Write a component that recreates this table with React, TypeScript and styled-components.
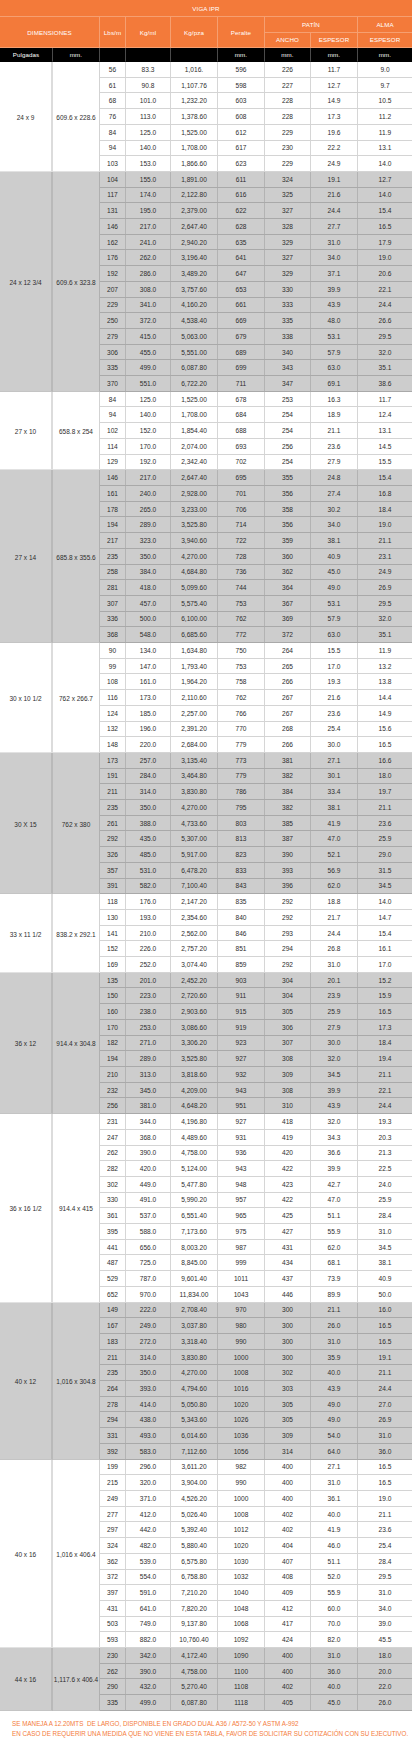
import React from "react";
import styled, { createGlobalStyle } from "styled-components";

const COLS = "53px 47px 26px 45px 47px 47px 46px 47px 54px";
const DATA_COLS = "26px 45px 47px 47px 46px 47px 54px";
const ROW_H = 15.71;

type Group = { inch: string; mm: string; rows: string[] };

const GROUPS: Group[] = [
  { inch: "24 x 9", mm: "609.6 x 228.6", rows: [
    "56 83.3 1,016. 596 226 11.7 9.0",
    "61 90.8 1,107.76 598 227 12.7 9.7",
    "68 101.0 1,232.20 603 228 14.9 10.5",
    "76 113.0 1,378.60 608 228 17.3 11.2",
    "84 125.0 1,525.00 612 229 19.6 11.9",
    "94 140.0 1,708.00 617 230 22.2 13.1",
    "103 153.0 1,866.60 623 229 24.9 14.0",
  ]},
  { inch: "24 x 12 3/4", mm: "609.6 x 323.8", rows: [
    "104 155.0 1,891.00 611 324 19.1 12.7",
    "117 174.0 2,122.80 616 325 21.6 14.0",
    "131 195.0 2,379.00 622 327 24.4 15.4",
    "146 217.0 2,647.40 628 328 27.7 16.5",
    "162 241.0 2,940.20 635 329 31.0 17.9",
    "176 262.0 3,196.40 641 327 34.0 19.0",
    "192 286.0 3,489.20 647 329 37.1 20.6",
    "207 308.0 3,757.60 653 330 39.9 22.1",
    "229 341.0 4,160.20 661 333 43.9 24.4",
    "250 372.0 4,538.40 669 335 48.0 26.6",
    "279 415.0 5,063.00 679 338 53.1 29.5",
    "306 455.0 5,551.00 689 340 57.9 32.0",
    "335 499.0 6,087.80 699 343 63.0 35.1",
    "370 551.0 6,722.20 711 347 69.1 38.6",
  ]},
  { inch: "27 x 10", mm: "658.8 x 254", rows: [
    "84 125.0 1,525.00 678 253 16.3 11.7",
    "94 140.0 1,708.00 684 254 18.9 12.4",
    "102 152.0 1,854.40 688 254 21.1 13.1",
    "114 170.0 2,074.00 693 256 23.6 14.5",
    "129 192.0 2,342.40 702 254 27.9 15.5",
  ]},
  { inch: "27 x 14", mm: "685.8 x 355.6", rows: [
    "146 217.0 2,647.40 695 355 24.8 15.4",
    "161 240.0 2,928.00 701 356 27.4 16.8",
    "178 265.0 3,233.00 706 358 30.2 18.4",
    "194 289.0 3,525.80 714 356 34.0 19.0",
    "217 323.0 3,940.60 722 359 38.1 21.1",
    "235 350.0 4,270.00 728 360 40.9 23.1",
    "258 384.0 4,684.80 736 362 45.0 24.9",
    "281 418.0 5,099.60 744 364 49.0 26.9",
    "307 457.0 5,575.40 753 367 53.1 29.5",
    "336 500.0 6,100.00 762 369 57.9 32.0",
    "368 548.0 6,685.60 772 372 63.0 35.1",
  ]},
  { inch: "30 x 10 1/2", mm: "762 x 266.7", rows: [
    "90 134.0 1,634.80 750 264 15.5 11.9",
    "99 147.0 1,793.40 753 265 17.0 13.2",
    "108 161.0 1,964.20 758 266 19.3 13.8",
    "116 173.0 2,110.60 762 267 21.6 14.4",
    "124 185.0 2,257.00 766 267 23.6 14.9",
    "132 196.0 2,391.20 770 268 25.4 15.6",
    "148 220.0 2,684.00 779 266 30.0 16.5",
  ]},
  { inch: "30 X 15", mm: "762 x 380", rows: [
    "173 257.0 3,135.40 773 381 27.1 16.6",
    "191 284.0 3,464.80 779 382 30.1 18.0",
    "211 314.0 3,830.80 786 384 33.4 19.7",
    "235 350.0 4,270.00 795 382 38.1 21.1",
    "261 388.0 4,733.60 803 385 41.9 23.6",
    "292 435.0 5,307.00 813 387 47.0 25.9",
    "326 485.0 5,917.00 823 390 52.1 29.0",
    "357 531.0 6,478.20 833 393 56.9 31.5",
    "391 582.0 7,100.40 843 396 62.0 34.5",
  ]},
  { inch: "33 x 11 1/2", mm: "838.2 x 292.1", rows: [
    "118 176.0 2,147.20 835 292 18.8 14.0",
    "130 193.0 2,354.60 840 292 21.7 14.7",
    "141 210.0 2,562.00 846 293 24.4 15.4",
    "152 226.0 2,757.20 851 294 26.8 16.1",
    "169 252.0 3,074.40 859 292 31.0 17.0",
  ]},
  { inch: "36 x 12", mm: "914.4 x 304.8", rows: [
    "135 201.0 2,452.20 903 304 20.1 15.2",
    "150 223.0 2,720.60 911 304 23.9 15.9",
    "160 238.0 2,903.60 915 305 25.9 16.5",
    "170 253.0 3,086.60 919 306 27.9 17.3",
    "182 271.0 3,306.20 923 307 30.0 18.4",
    "194 289.0 3,525.80 927 308 32.0 19.4",
    "210 313.0 3,818.60 932 309 34.5 21.1",
    "232 345.0 4,209.00 943 308 39.9 22.1",
    "256 381.0 4,648.20 951 310 43.9 24.4",
  ]},
  { inch: "36 x 16 1/2", mm: "914.4 x 415", rows: [
    "231 344.0 4,196.80 927 418 32.0 19.3",
    "247 368.0 4,489.60 931 419 34.3 20.3",
    "262 390.0 4,758.00 936 420 36.6 21.3",
    "282 420.0 5,124.00 943 422 39.9 22.5",
    "302 449.0 5,477.80 948 423 42.7 24.0",
    "330 491.0 5,990.20 957 422 47.0 25.9",
    "361 537.0 6,551.40 965 425 51.1 28.4",
    "395 588.0 7,173.60 975 427 55.9 31.0",
    "441 656.0 8,003.20 987 431 62.0 34.5",
    "487 725.0 8,845.00 999 434 68.1 38.1",
    "529 787.0 9,601.40 1011 437 73.9 40.9",
    "652 970.0 11,834.00 1043 446 89.9 50.0",
  ]},
  { inch: "40 x 12", mm: "1,016 x 304.8", rows: [
    "149 222.0 2,708.40 970 300 21.1 16.0",
    "167 249.0 3,037.80 980 300 26.0 16.5",
    "183 272.0 3,318.40 990 300 31.0 16.5",
    "211 314.0 3,830.80 1000 300 35.9 19.1",
    "235 350.0 4,270.00 1008 302 40.0 21.1",
    "264 393.0 4,794.60 1016 303 43.9 24.4",
    "278 414.0 5,050.80 1020 305 49.0 27.0",
    "294 438.0 5,343.60 1026 305 49.0 26.9",
    "331 493.0 6,014.60 1036 309 54.0 31.0",
    "392 583.0 7,112.60 1056 314 64.0 36.0",
  ]},
  { inch: "40 x 16", mm: "1,016 x 406.4", rows: [
    "199 296.0 3,611.20 982 400 27.1 16.5",
    "215 320.0 3,904.00 990 400 31.0 16.5",
    "249 371.0 4,526.20 1000 400 36.1 19.0",
    "277 412.0 5,026.40 1008 402 40.0 21.1",
    "297 442.0 5,392.40 1012 402 41.9 23.6",
    "324 482.0 5,880.40 1020 404 46.0 25.4",
    "362 539.0 6,575.80 1030 407 51.1 28.4",
    "372 554.0 6,758.80 1032 408 52.0 29.5",
    "397 591.0 7,210.20 1040 409 55.9 31.0",
    "431 641.0 7,820.20 1048 412 60.0 34.0",
    "503 749.0 9,137.80 1068 417 70.0 39.0",
    "593 882.0 10,760.40 1092 424 82.0 45.5",
  ]},
  { inch: "44 x 16", mm: "1,117.6 x 406.4", rows: [
    "230 342.0 4,172.40 1090 400 31.0 18.0",
    "262 390.0 4,758.00 1100 400 36.0 20.0",
    "290 432.0 5,270.40 1108 402 40.0 22.0",
    "335 499.0 6,087.80 1118 405 45.0 26.0",
  ]},
];

const Global = createGlobalStyle`
  html, body { margin: 0; padding: 0; background: #ffffff; }
  body { font-family: "Liberation Sans", Arial, sans-serif; }
`;

const Page = styled.div`
  width: 412px;
  background: #ffffff;
`;

const Head = styled.div`
  display: grid;
  grid-template-columns: ${COLS};
  grid-template-rows: 17px 15.5px 15.5px 14px;
  background: #f37a3a;
`;

const HeadCell = styled.div<{ $col: string; $row: string; $dark?: boolean; $last?: boolean }>`
  grid-column: ${(p) => p.$col};
  grid-row: ${(p) => p.$row};
  display: flex;
  align-items: center;
  justify-content: center;
  box-sizing: border-box;
  font-size: 6.2px;
  letter-spacing: 0.1px;
  color: #ffffff;
  background: ${(p) => (p.$dark ? "#000000" : "#f37a3a")};
  border-right: ${(p) =>
    p.$last ? "none" : p.$dark ? "1px solid #4a4a4a" : "1px solid rgba(255,255,255,0.28)"};
  border-bottom: ${(p) => (p.$dark ? "1px solid #000" : "1px solid rgba(255,255,255,0.28)")};
  white-space: nowrap;
`;

const GroupBox = styled.div<{ $shade: boolean }>`
  display: flex;
  background: ${(p) => (p.$shade ? "#cdcdcd" : "#ffffff")};
  color: #2e2e2e;
`;

const Label = styled.div<{ $w: number; $shade: boolean; $thick?: boolean }>`
  width: ${(p) => p.$w}px;
  flex: none;
  box-sizing: border-box;
  display: flex;
  align-items: center;
  justify-content: center;
  font-size: 6.5px;
  white-space: nowrap;
  padding-top: 2px;
  border-right: ${(p) =>
    p.$thick
      ? `2px solid ${p.$shade ? "#b9b9b9" : "#dcdcdc"}`
      : `1px solid ${p.$shade ? "#b0b0b0" : "#d3d3d3"}`};
  border-bottom: 1px solid ${(p) => (p.$shade ? "#c4c4c4" : "#e2e2e2")};
`;

const Rows = styled.div`
  flex: 1;
  display: flex;
  flex-direction: column;
`;

const Row = styled.div<{ $shade: boolean }>`
  display: grid;
  grid-template-columns: ${DATA_COLS};
  height: ${ROW_H}px;
  box-sizing: border-box;
  border-bottom: 1px solid ${(p) => (p.$shade ? "#a9a9a9" : "#d4d4d4")};
`;

const Cell = styled.div<{ $shade: boolean; $last?: boolean }>`
  display: flex;
  align-items: center;
  justify-content: center;
  font-size: 6.6px;
  white-space: nowrap;
  border-right: ${(p) =>
    p.$last ? "none" : `1px solid ${p.$shade ? "#b3b3b3" : "#d6d6d6"}`};
`;

const Notes = styled.div`
  padding: 8px 0 0 12px;
  color: #f47c3c;
  font-size: 6.3px;
  line-height: 10.5px;
  white-space: nowrap;
`;

export default function App() {
  return (
    <Page>
      <Global />
      <Head>
        <HeadCell $col="1 / 10" $row="1" $last>VIGA IPR</HeadCell>
        <HeadCell $col="1 / 3" $row="2 / 4">DIMENSIONES</HeadCell>
        <HeadCell $col="3" $row="2 / 4">Lbs/m</HeadCell>
        <HeadCell $col="4" $row="2 / 4">Kg/ml</HeadCell>
        <HeadCell $col="5" $row="2 / 4">Kg/pza</HeadCell>
        <HeadCell $col="6" $row="2 / 4">Peralte</HeadCell>
        <HeadCell $col="7 / 9" $row="2">PATÍN</HeadCell>
        <HeadCell $col="9" $row="2" $last>ALMA</HeadCell>
        <HeadCell $col="7" $row="3">ANCHO</HeadCell>
        <HeadCell $col="8" $row="3">ESPESOR</HeadCell>
        <HeadCell $col="9" $row="3" $last>ESPESOR</HeadCell>
        <HeadCell $col="1" $row="4" $dark>Pulgadas</HeadCell>
        <HeadCell $col="2" $row="4" $dark>mm.</HeadCell>
        <HeadCell $col="3" $row="4" $dark />
        <HeadCell $col="4" $row="4" $dark />
        <HeadCell $col="5" $row="4" $dark />
        <HeadCell $col="6" $row="4" $dark>mm.</HeadCell>
        <HeadCell $col="7" $row="4" $dark>mm.</HeadCell>
        <HeadCell $col="8" $row="4" $dark>mm.</HeadCell>
        <HeadCell $col="9" $row="4" $dark $last>mm.</HeadCell>
      </Head>
      {GROUPS.map((g, gi) => {
        const shade = gi % 2 === 1;
        return (
          <GroupBox key={gi} $shade={shade}>
            <Label $w={53} $shade={shade} $thick>{g.inch}</Label>
            <Label $w={47} $shade={shade}>{g.mm}</Label>
            <Rows>
              {g.rows.map((r, ri) => {
                const vals = r.split(" ");
                return (
                  <Row key={ri} $shade={shade}>
                    {vals.map((v, vi) => (
                      <Cell key={vi} $shade={shade} $last={vi === vals.length - 1}>
                        {v}
                      </Cell>
                    ))}
                  </Row>
                );
              })}
            </Rows>
          </GroupBox>
        );
      })}
      <Notes>
        <div>SE MANEJA A 12.20MTS&nbsp; DE LARGO, DISPONIBLE EN GRADO DUAL A36 / A572-50 Y ASTM A-992</div>
        <div>EN CASO DE REQUERIR UNA MEDIDA QUE NO VIENE EN ESTA TABLA, FAVOR DE SOLICITAR SU COTIZACIÓN CON SU EJECUTIVO.</div>
      </Notes>
    </Page>
  );
}
